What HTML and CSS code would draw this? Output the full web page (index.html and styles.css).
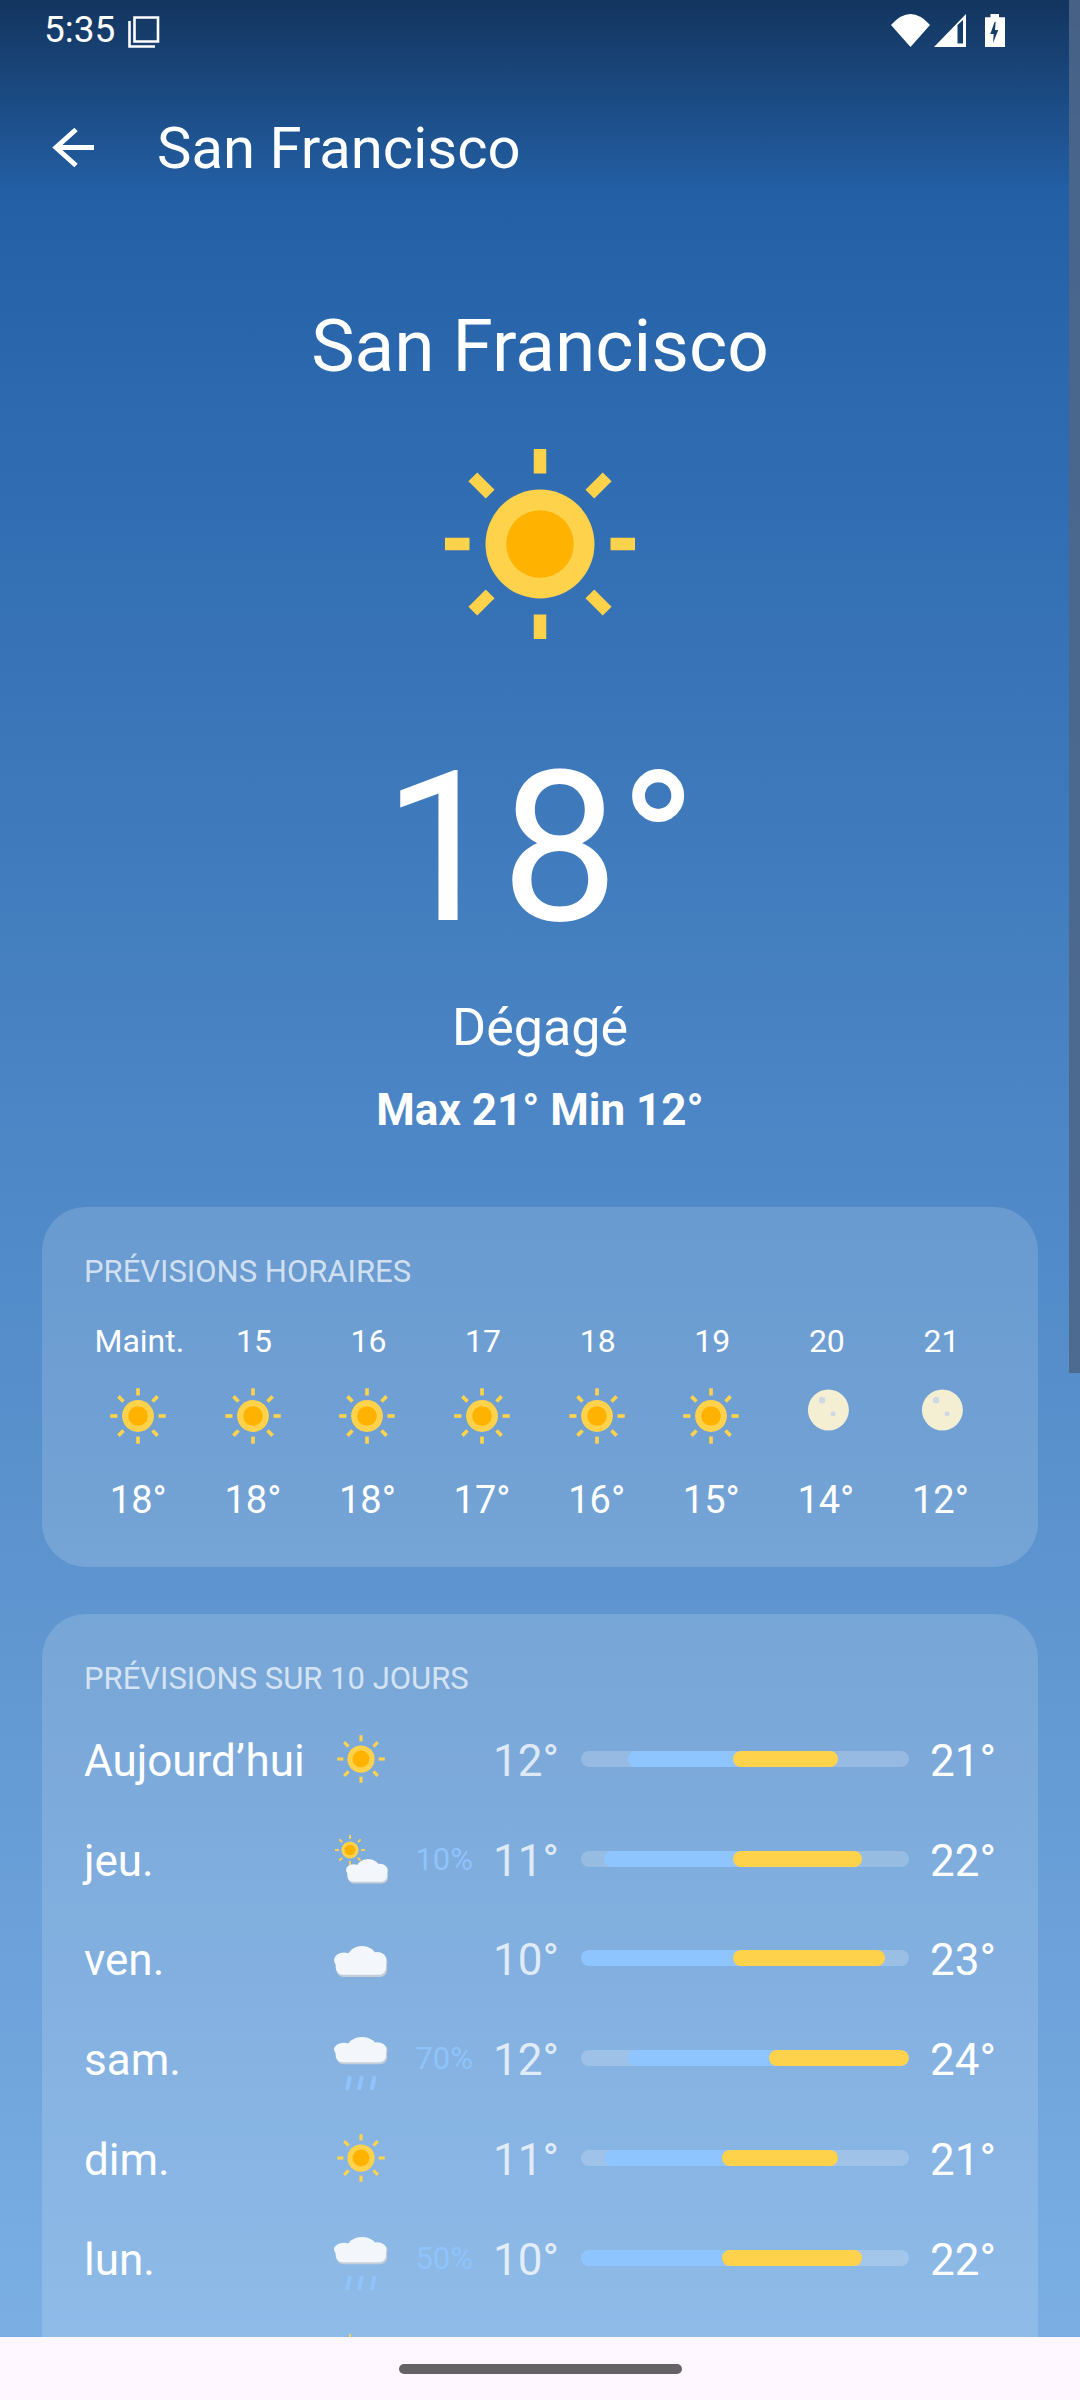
FILE: index.html
```html
<!DOCTYPE html>
<html lang="fr">
<head>
    <meta charset="UTF-8">
    <meta name="viewport" content="width=device-width, initial-scale=1.0">
    <title>Météo San Francisco</title>
    <link rel="stylesheet" href="styles.css">
</head>
<body>

    <!-- icons used more than once -->
    <svg class="defs" width="0" height="0">
        <defs>
            <g id="sun-shape">
                <g fill="#ffd24c">
                    <rect x="-6.25" y="-95" width="12.5" height="24.5"/>
                    <rect x="-6.25" y="-95" width="12.5" height="24.5" transform="rotate(45)"/>
                    <rect x="-6.25" y="-95" width="12.5" height="24.5" transform="rotate(90)"/>
                    <rect x="-6.25" y="-95" width="12.5" height="24.5" transform="rotate(135)"/>
                    <rect x="-6.25" y="-95" width="12.5" height="24.5" transform="rotate(180)"/>
                    <rect x="-6.25" y="-95" width="12.5" height="24.5" transform="rotate(225)"/>
                    <rect x="-6.25" y="-95" width="12.5" height="24.5" transform="rotate(270)"/>
                    <rect x="-6.25" y="-95" width="12.5" height="24.5" transform="rotate(315)"/>
                    <circle r="54.5"/>
                </g>
                <circle r="33.8" fill="#ffb300"/>
            </g>
            <g id="puff">
                <ellipse cx="10" cy="14" rx="10" ry="7.5"/>
                <ellipse cx="28" cy="13" rx="15" ry="13"/>
                <ellipse cx="43" cy="14" rx="9.5" ry="8"/>
                <rect x="1.7" y="10" width="50.3" height="18.7" rx="7"/>
            </g>
            <g id="cloud-shape">
                <use href="#puff" x="1" y="2.3" fill="#c6cfd9"/>
                <use href="#puff" fill="#f3f6fb"/>
            </g>
            <symbol id="ic-sun" viewBox="0 0 64 64">
                <use href="#sun-shape" transform="translate(32 32) scale(.25)"/>
            </symbol>
            <symbol id="ic-sun-hour" viewBox="0 0 64 64">
                <use href="#sun-shape" transform="translate(32 32) scale(.2916)"/>
            </symbol>
            <symbol id="ic-partly" viewBox="0 0 64 64">
                <use href="#sun-shape" transform="translate(21 23) scale(.158)"/>
                <use href="#cloud-shape" transform="translate(17 32) scale(.79)"/>
            </symbol>
            <symbol id="ic-cloud" viewBox="0 0 64 64">
                <use href="#cloud-shape" transform="translate(5 20)"/>
            </symbol>
            <symbol id="ic-rain" viewBox="0 0 64 64">
                <use href="#cloud-shape" transform="translate(5 11) scale(1 .88)"/>
                <path d="M21 50l-3 14M33 50l-3 14M45.7 50l-3 14" stroke="#8fc3fb" stroke-width="4" fill="none"/>
            </symbol>
            <symbol id="ic-moon" viewBox="0 0 64 64">
                <circle cx="34.4" cy="26" r="20.5" fill="#f4eed3"/>
                <circle cx="28.1" cy="16.3" r="3.2" fill="#cfd8e6"/>
                <circle cx="39.1" cy="29.7" r="2.5" fill="#cfd8e6"/>
            </symbol>
        </defs>
    </svg>

    <div class="screen">
        <div class="status-bar">
            <span class="time">5:35</span>
            <svg class="status-stack" width="32" height="33" viewBox="0 0 32 33">
                <path d="M6.5 2.5h23.5v24H6.5z" fill="none" stroke="#fff" stroke-width="2.6"/>
                <path d="M1.5 6v25.5H27" fill="none" stroke="#fff" stroke-width="2.6"/>
            </svg>
            <span class="status-right">
                <svg width="39" height="33" viewBox="0 0 39 33">
                    <path d="M19.5 33L0 11Q19.5-11 39 11z" fill="#fff"/>
                </svg>
                <svg width="32" height="33" viewBox="0 0 32 33">
                    <path d="M32 0v33H0zM23.5 11v18.500H29V6z" fill="#fff" fill-rule="evenodd"/>
                </svg>
                <svg width="20" height="33" viewBox="0 0 20 33">
                    <path d="M5.500 0h8.500v3.300h6V33H0V3.300h5.500zM9.700 7.700L5.300 20h3.400L8 29l5.300-13H10l.7-8.300z" fill="#fff" fill-rule="evenodd"/>
                </svg>
            </span>
        </div>

        <header class="toolbar">
            <svg class="back" width="42" height="42" viewBox="0 0 42 42">
                <path d="M42 21.500H5M24 3.500L4 21.500l20 18" fill="none" stroke="#fff" stroke-width="5"/>
            </svg>
            <h2>San Francisco</h2>
        </header>

        <section class="current">
            <h1>San Francisco</h1>
            <svg class="big-sun" width="200" height="200" viewBox="-100 -100 200 200">
                <use href="#sun-shape"/>
            </svg>
            <div class="big-temp">18°</div>
            <div class="condition">Dégagé</div>
            <div class="minmax">Max 21° Min 12°</div>
        </section>

        <section class="card hourly">
            <h3>PRÉVISIONS HORAIRES</h3>
            <div class="hours">
                <div class="hour"><span>Maint.</span><svg><use href="#ic-sun-hour"/></svg><b>18°</b></div>
                <div class="hour"><span>15</span><svg><use href="#ic-sun-hour"/></svg><b>18°</b></div>
                <div class="hour"><span>16</span><svg><use href="#ic-sun-hour"/></svg><b>18°</b></div>
                <div class="hour"><span>17</span><svg><use href="#ic-sun-hour"/></svg><b>17°</b></div>
                <div class="hour"><span>18</span><svg><use href="#ic-sun-hour"/></svg><b>16°</b></div>
                <div class="hour"><span>19</span><svg><use href="#ic-sun-hour"/></svg><b>15°</b></div>
                <div class="hour"><span>20</span><svg><use href="#ic-moon"/></svg><b>14°</b></div>
                <div class="hour"><span>21</span><svg><use href="#ic-moon"/></svg><b>12°</b></div>
            </div>
        </section>

        <section class="card daily">
            <h3>PRÉVISIONS SUR 10 JOURS</h3>

            <div class="day">
                <span class="name">Aujourd’hui</span>
                <svg class="day-icon"><use href="#ic-sun"/></svg>
                <span class="pct"></span>
                <span class="low">12°</span>
                <div class="track"><i class="cool" style="margin-left:47px;width:113px"></i><i class="warm" style="width:105px"></i></div>
                <span class="high">21°</span>
            </div>
            <div class="day">
                <span class="name">jeu.</span>
                <svg class="day-icon"><use href="#ic-partly"/></svg>
                <span class="pct">10%</span>
                <span class="low">11°</span>
                <div class="track"><i class="cool" style="margin-left:23px;width:137px"></i><i class="warm" style="width:129px"></i></div>
                <span class="high">22°</span>
            </div>
            <div class="day">
                <span class="name">ven.</span>
                <svg class="day-icon"><use href="#ic-cloud"/></svg>
                <span class="pct"></span>
                <span class="low">10°</span>
                <div class="track"><i class="cool" style="margin-left:0;width:160px"></i><i class="warm" style="width:152px"></i></div>
                <span class="high">23°</span>
            </div>
            <div class="day">
                <span class="name">sam.</span>
                <svg class="day-icon"><use href="#ic-rain"/></svg>
                <span class="pct">70%</span>
                <span class="low">12°</span>
                <div class="track"><i class="cool" style="margin-left:47px;width:149px"></i><i class="warm" style="width:140px"></i></div>
                <span class="high">24°</span>
            </div>
            <div class="day">
                <span class="name">dim.</span>
                <svg class="day-icon"><use href="#ic-sun"/></svg>
                <span class="pct"></span>
                <span class="low">11°</span>
                <div class="track"><i class="cool" style="margin-left:23px;width:126px"></i><i class="warm" style="width:116px"></i></div>
                <span class="high">21°</span>
            </div>
            <div class="day">
                <span class="name">lun.</span>
                <svg class="day-icon"><use href="#ic-rain"/></svg>
                <span class="pct">50%</span>
                <span class="low">10°</span>
                <div class="track"><i class="cool" style="margin-left:0;width:149px"></i><i class="warm" style="width:140px"></i></div>
                <span class="high">22°</span>
            </div>
            <div class="day">
                <span class="name"></span>
                <svg class="day-icon"><use href="#ic-partly"/></svg>
            </div>
        </section>

        <div class="scrollbar"></div>
        <div class="nav-bar"><div class="pill"></div></div>
    </div>

</body>
</html>
```

FILE: styles.css
```css
* {
    margin: 0;
    padding: 0;
    box-sizing: border-box;
}
html, body {
    width: 1080px;
    height: 2400px;
    overflow: hidden;
}
body {
    font-family: Roboto, "Noto Sans", sans-serif;
    color: white;
}
.defs {
    display: block;
    height: 0;
}
.screen {
    position: relative;
    width: 1080px;
    height: 2400px;
    overflow: hidden;
    background: linear-gradient(180deg, #13355f 0, #235fa4 190px, #2c68ae 380px, #4f89c8 1200px, #5f96d0 1610px, #7bafe4 2337px);
}

/* status bar */
.status-bar {
    height: 60px;
    display: flex;
    align-items: center;
    padding: 0 75px 0 44px;
}
.time {
    font-size: 37px;
    line-height: 60px;
}
.status-stack {
    margin-left: 13px;
    margin-top: 3px;
}
.status-right {
    margin-left: auto;
    display: flex;
    align-items: center;
    gap: 4px;
    margin-top: 1px;
}
.status-right svg:last-child {
    margin-left: 15px;
}

/* toolbar */
.toolbar {
    height: 96px;
    display: flex;
    align-items: center;
    padding-left: 52px;
    margin-top: 40px;
}
.back {
    margin-top: -3px;
}
.toolbar h2 {
    font-size: 58px;
    font-weight: 400;
    margin-left: 63px;
}

/* current weather */
.current {
    display: flex;
    flex-direction: column;
    align-items: center;
    padding-top: 109px;
}
.current h1 {
    font-size: 73px;
    font-weight: 400;
    line-height: 82px;
}
.big-sun {
    margin-top: 57px;
}
.big-temp {
    font-size: 210px;
    line-height: 250px;
    margin-top: 79px;
}
.condition {
    font-size: 52px;
    line-height: 56px;
    margin-top: 27px;
}
.minmax {
    font-size: 44px;
    font-weight: 700;
    line-height: 50px;
    margin-top: 29px;
}

/* cards */
.card {
    margin: 0 42px;
    padding: 0 42px;
    border-radius: 44px;
    background: rgba(255, 255, 255, 0.15);
}
.card h3 {
    font-size: 31px;
    font-weight: 400;
    line-height: 36px;
    color: rgba(255, 255, 255, 0.7);
}
.hourly {
    height: 360px;
    margin-top: 72px;
    padding-top: 47px;
}
.hours {
    display: grid;
    grid-template-columns: repeat(8, 114.6px);
    margin: 31px 0 0 -3px;
}
.hour {
    display: flex;
    flex-direction: column;
    align-items: center;
}
.hour span {
    padding-left: 2px;
    font-size: 32px;
    line-height: 40px;
}
.hour svg {
    width: 64px;
    height: 64px;
    margin-top: 23px;
}
.hour b {
    font-size: 38px;
    font-weight: 400;
    line-height: 44px;
    margin-top: 30px;
}
.daily {
    height: 900px;
    margin-top: 47px;
    padding-top: 47px;
}
.daily h3 {
    margin-bottom: 12px;
}
.day {
    height: 99.8px;
    display: flex;
    align-items: center;
}
.name {
    width: 245px;
    margin-top: 4px;
    font-size: 44px;
}
.day-icon {
    width: 64px;
    height: 64px;
    flex: none;
}
.pct {
    width: 80px;
    margin-top: 1px;
    text-align: right;
    font-size: 31px;
    color: #8fc3fb;
}
.low {
    width: 86px;
    margin-top: 4px;
    text-align: right;
    font-size: 44px;
    color: rgba(255, 255, 255, 0.75);
}
.high {
    width: 67px;
    margin: 4px 0 0 20px;
    text-align: right;
    font-size: 44px;
}
.track {
    width: 328px;
    height: 16px;
    margin-left: 22px;
    display: flex;
    overflow: hidden;
    border-radius: 8px;
    background: rgba(255, 255, 255, 0.2);
}
.track i {
    display: block;
    height: 16px;
    border-radius: 8px;
}
.cool {
    background: #8ec5ff;
}
.warm {
    margin-left: -8px;
    background: #ffd24c;
}

/* system overlays */
.scrollbar {
    position: absolute;
    top: 0;
    right: 0;
    width: 11px;
    height: 1373px;
    background: #4c6689;
    opacity: 0.9;
}
.nav-bar {
    position: absolute;
    left: 0;
    right: 0;
    bottom: 0;
    height: 63px;
    display: flex;
    justify-content: center;
    padding-top: 27px;
    background: #fef7ff;
}
.pill {
    width: 283px;
    height: 10px;
    border-radius: 5px;
    background: #646265;
}
```
